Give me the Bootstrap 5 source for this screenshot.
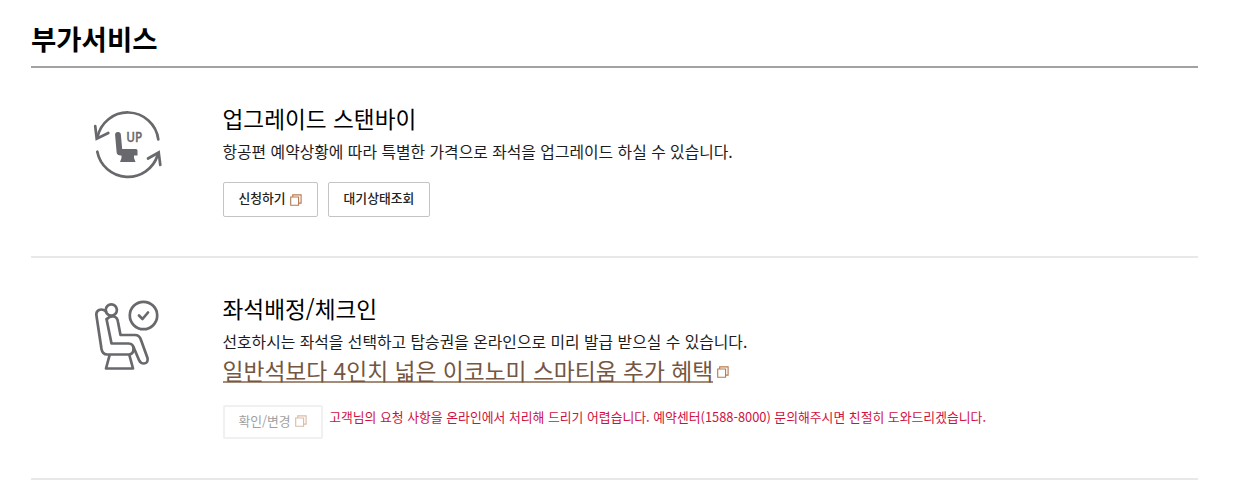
<!DOCTYPE html>
<html lang="ko">
<head>
  <meta charset="UTF-8">
  <title>부가서비스</title>
  <meta name="viewport" content="width=device-width, initial-scale=1.0">
  <!-- Bootstrap 5 CDN -->
  <link href="https://cdn.jsdelivr.net/npm/bootstrap@5.3.2/dist/css/bootstrap.min.css" rel="stylesheet">
  <style>
    body {
      background-color: #fff;
      color: #111;
      font-family: "Noto Sans CJK KR", sans-serif;
      overflow: hidden;
    }
    .service-page {
      width: 1167px;
      margin-left: 31px;
      padding-top: 18px;
    }
    .page-title {
      height: 50px;
      border-bottom: 2px solid #a2a2a2;
      font-size: 27.5px;
      line-height: 40px;
      font-weight: 700;
      color: #000;
    }
    .service-item {
      border-bottom: 2px solid #e8e8e8;
    }
    .item-upgrade { height: 190px; padding-top: 35px; }
    .item-seat { height: 222px; padding-top: 35px; }
    .service-icon {
      width: 191.5px;
      padding: 4px 0 0 60px;
    }
    .item-seat .service-icon { padding-top: 3px; }
    .service-icon svg { display: block; }
    .service-name {
      font-size: 22.65px;
      line-height: 32px;
      font-weight: 400;
      color: #000;
    }
    .service-desc {
      font-size: 15.83px;
      line-height: 24px;
      margin-top: 5px;
      color: #1c1c1c;
    }
    .service-link {
      height: 30px;
      margin-top: 1px;
      font-size: 22.77px;
      line-height: 26px;
      color: #755640;
      text-decoration: none;
    }
    .service-link span {
      height: 25px;
      border-bottom: 2px solid #a58c78;
    }
    .btn-service {
      height: 35px;
      padding: 0 15px 3px;
      border: 1px solid #c4c4c4;
      border-radius: 2px;
      font-size: 12.8px;
      line-height: 30px;
      font-weight: 500;
      color: #222;
      background-color: #fff;
    }
    .item-upgrade .service-buttons { margin-top: 18px; gap: 10px; }
    .item-seat .service-buttons { margin-top: 20px; }
    .btn-service:disabled {
      height: 34px;
      padding: 0 14px 2px;
      border: 2px solid #f0f0f0;
      color: #a0a0a0;
      font-weight: 400;
      background-color: #fff;
      opacity: 1;
    }
    .btn-service:disabled svg { opacity: .5; }
    .notice {
      margin-left: 6.5px;
      font-size: 12.85px;
      line-height: 24px;
      color: #cf1040;
    }
  </style>
</head>
<body>

<!-- New window mark -->
<svg class="d-none">
  <symbol id="newWindow" viewBox="0 0 12 12">
    <path d="M.7 3h7.900v8.300H.7zM2.700 3V.9h8.400v8.200H8.600" fill="none" stroke="#b5794f" stroke-width="1.100"/>
  </symbol>
</svg>

<main class="service-page">
  <h1 class="page-title mb-0">부가서비스</h1>

  <!-- Upgrade standby -->
  <section class="service-item item-upgrade d-flex">
    <div class="service-icon flex-shrink-0">
      <svg width="76" height="80" viewBox="0 0 76 80" fill="none" stroke="#68696c" stroke-width="2.700" stroke-linecap="round">
        <path d="M67.300 32.300A30.800 30.800 0 0 0 6.500 30.500"/>
        <path d="M4.200 19 5.700 31.800 17.300 26"/>
        <path d="M6.300 44.700A31.200 31.200 0 0 0 66.700 48"/>
        <path d="M57 51.500 67.700 45.500 69.300 58"/>
        <path d="M27 28 28.500 45" stroke-width="5.800"/>
        <path d="M27.500 42h17.500q1.500 0 1.500 1.500V48.500H29.500q-3 0-3.500-3.500zM30.500 48H43v3l1.500 4H29L30.500 51z" fill="#68696c" stroke="none"/>
        <text x="35.300" y="34.500" font-family="Open Sans, sans-serif" font-size="13.500" font-weight="600" fill="#68696c" stroke="#68696c" stroke-width=".3" textLength="16" lengthAdjust="spacingAndGlyphs">UP</text>
      </svg>
    </div>
    <div>
      <h2 class="service-name mb-0">업그레이드 스탠바이</h2>
      <p class="service-desc mb-0">항공편 예약상황에 따라 특별한 가격으로 좌석을 업그레이드 하실 수 있습니다.</p>
      <div class="service-buttons d-flex">
        <button type="button" class="btn btn-service d-flex align-items-center">신청하기 <svg class="ms-1 mt-1" width="12" height="12"><use href="#newWindow"/></svg></button>
        <button type="button" class="btn btn-service">대기상태조회</button>
      </div>
    </div>
  </section>

  <!-- Seat assignment and check-in -->
  <section class="service-item item-seat d-flex">
    <div class="service-icon flex-shrink-0">
      <svg width="76" height="80" viewBox="0 0 76 80" fill="none" stroke="#68696c" stroke-width="2.700" stroke-linecap="round" stroke-linejoin="round">
        <circle cx="52.500" cy="19.500" r="13.700"/>
        <path d="M48 19.500 51.500 23 57 16.500"/>
        <circle cx="20.300" cy="14" r="5.600"/>
        <path d="M15.200 15.500C10 11.500 4.500 14 5.500 20L10.500 53Q11.500 58.500 16 58.500H38Q42.500 58 42.500 53Q42.500 47.500 37.500 47.500H20.500L15.500 23"/>
        <path d="M16 23Q19 19.500 23 20.500Q26.500 21.500 27 26L29.500 39H44Q48.500 39 50 44L56.500 62Q57.500 67 53 67.500Q49.500 67.500 48 64L42.500 51"/>
        <path d="M18.500 59.500 15 72.500H42L38.500 59.500"/>
      </svg>
    </div>
    <div>
      <h2 class="service-name mb-0">좌석배정/체크인</h2>
      <p class="service-desc mb-0">선호하시는 좌석을 선택하고 탑승권을 온라인으로 미리 발급 받으실 수 있습니다.</p>
      <a href="#" class="service-link d-flex align-items-center"><span>일반석보다 4인치 넓은 이코노미 스마티움 추가 혜택</span><svg class="ms-1 mt-1" width="12" height="12"><use href="#newWindow"/></svg></a>
      <div class="service-buttons d-flex">
        <button type="button" class="btn btn-service d-flex align-items-center" disabled>확인/변경 <svg class="ms-1" width="12" height="12"><use href="#newWindow"/></svg></button>
        <p class="notice mb-0">고객님의 요청 사항을 온라인에서 처리해 드리기 어렵습니다. 예약센터(1588-8000) 문의해주시면 친절히 도와드리겠습니다.</p>
      </div>
    </div>
  </section>
</main>

<!-- Bootstrap JS -->
<script src="https://cdn.jsdelivr.net/npm/bootstrap@5.3.2/dist/js/bootstrap.bundle.min.js"></script>

</body>
</html>
